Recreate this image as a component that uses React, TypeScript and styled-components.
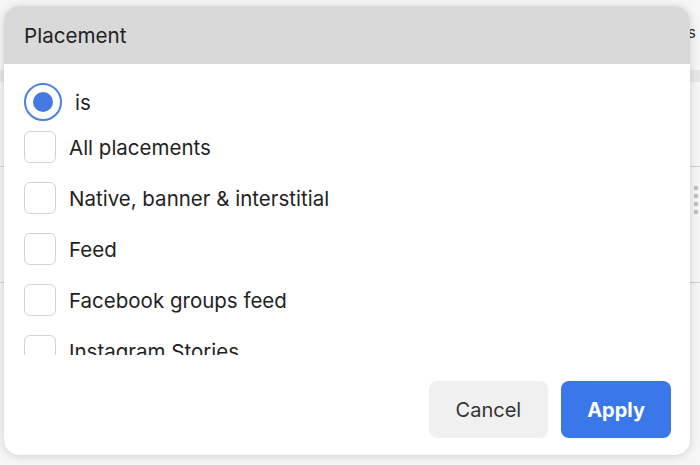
import React, { useState } from "react";
import styled, { createGlobalStyle } from "styled-components";

const GlobalStyle = createGlobalStyle`
  html, body {
    margin: 0;
    padding: 0;
    background: #f5f5f5;
  }
  * {
    box-sizing: border-box;
  }
`;

const Page = styled.div`
  position: relative;
  width: 700px;
  height: 465px;
  overflow: hidden;
  background: #f6f6f6;
  font-family: Inter, "Noto Sans", "Liberation Sans", sans-serif;
`;

const TopBar = styled.div`
  height: 70px;
  display: flex;
  align-items: center;
  justify-content: flex-end;
  padding: 0 4px 6px 0;
  font-size: 16px;
  color: #333;
`;

const TableHead = styled.div`
  height: 12px;
  background: #e7e7e7;
`;

const TableRow = styled.div<{ $h: number }>`
  height: ${(p) => p.$h}px;
  border-bottom: 1px solid #cfcfcf;
  display: flex;
  justify-content: flex-end;
  align-items: flex-start;
  padding: 19px 0 0;
`;

const Grip = styled.svg`
  display: block;
  margin-right: -6px;
`;

const Dialog = styled.div`
  position: absolute;
  left: 4px;
  top: 6px;
  width: 686px;
  height: 449px;
  background: #fff;
  border-radius: 15px;
  box-shadow: 0 1px 10px rgba(0, 0, 0, 0.16);
  display: flex;
  flex-direction: column;
  overflow: hidden;
`;

const Header = styled.div`
  height: 58px;
  flex: none;
  background: #d9d9d9;
  display: flex;
  align-items: center;
  padding: 0 20px 0;
  font-size: 20.6px;
  color: #222;
`;

const Body = styled.div`
  height: 291px;
  flex: none;
  overflow: hidden;
  padding: 19px 20px 0;
`;

const RadioRow = styled.label`
  display: flex;
  align-items: center;
  gap: 13px;
  height: 38px;
  font-size: 20.5px;
  color: #1f1f1f;
  cursor: pointer;
`;

const RadioOuter = styled.span`
  width: 38px;
  height: 38px;
  border-radius: 50%;
  border: 2px solid #4d80e4;
  display: flex;
  align-items: center;
  justify-content: center;
  flex: none;
`;

const RadioDot = styled.span`
  width: 20px;
  height: 20px;
  border-radius: 50%;
  background: #4479e1;
`;

const CheckRow = styled.label`
  display: flex;
  align-items: center;
  gap: 13px;
  height: 51px;
  padding-top: 2px;
  font-size: 20.5px;
  color: #1f1f1f;
  cursor: pointer;
`;

const Box = styled.span<{ $on: boolean }>`
  width: 32px;
  height: 32px;
  flex: none;
  margin-top: -2px;
  border-radius: 6px;
  border: 1.5px solid ${(p) => (p.$on ? "#3a77e8" : "#d2d2d2")};
  background: ${(p) => (p.$on ? "#3a77e8" : "#fff")};
`;

const Footer = styled.div`
  flex: 1;
  display: flex;
  justify-content: flex-end;
  align-items: flex-start;
  gap: 13px;
  padding: 26px 19px 0;
`;

const Button = styled.button<{ $primary?: boolean }>`
  height: 57px;
  padding: 0 ${(p) => (p.$primary ? 26 : 27)}px;
  border: none;
  border-radius: 8px;
  font-family: inherit;
  font-size: 20px;
  font-weight: ${(p) => (p.$primary ? 700 : 400)};
  color: ${(p) => (p.$primary ? "#fff" : "#333")};
  background: ${(p) => (p.$primary ? "#3a77e8" : "#f0f0f0")};
  cursor: pointer;
`;

const options = [
  "All placements",
  "Native, banner & interstitial",
  "Feed",
  "Facebook groups feed",
  "Instagram Stories",
  "Instagram feed",
];

export default function App() {
  const [checked, setChecked] = useState<Record<string, boolean>>({});

  return (
    <Page>
      <GlobalStyle />
      <TopBar>Columns</TopBar>
      <TableHead />
      <TableRow $h={85} />
      <TableRow $h={116}>
        <Grip width="12" height="28" viewBox="0 0 12 28">
          {[0, 8, 16, 24].map((y) => (
            <g key={y} fill="#bdbdbd">
              <rect x="0" y={y} width="4" height="4" rx="1" />
              <rect x="8" y={y} width="4" height="4" rx="1" />
            </g>
          ))}
        </Grip>
      </TableRow>
      <Dialog>
        <Header>Placement</Header>
        <Body>
          <RadioRow>
            <RadioOuter>
              <RadioDot />
            </RadioOuter>
            is
          </RadioRow>
          {options.map((o) => (
            <CheckRow
              key={o}
              onClick={() => setChecked((c) => ({ ...c, [o]: !c[o] }))}
            >
              <Box $on={!!checked[o]} />
              {o}
            </CheckRow>
          ))}
        </Body>
        <Footer>
          <Button>Cancel</Button>
          <Button $primary>Apply</Button>
        </Footer>
      </Dialog>
    </Page>
  );
}
